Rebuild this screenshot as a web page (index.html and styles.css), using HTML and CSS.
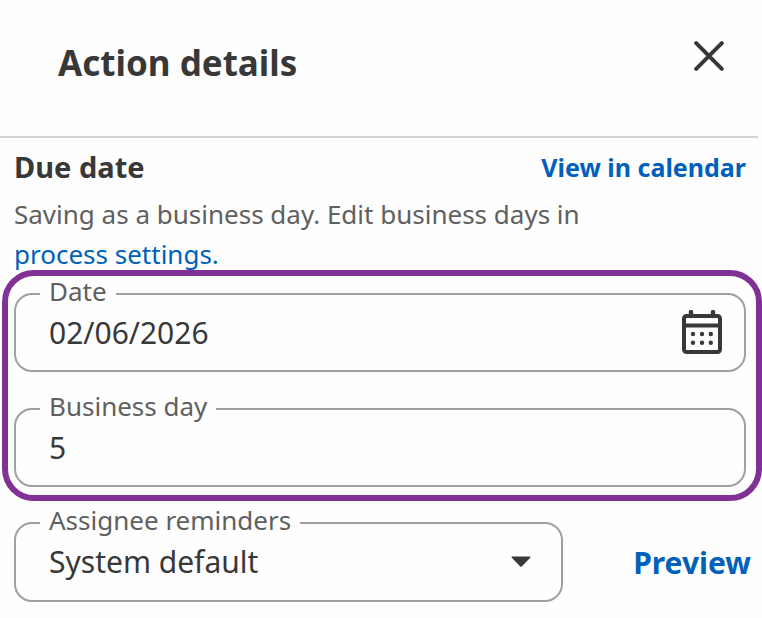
FILE: index.html
```html
<!DOCTYPE html>
<html lang="en">
<head>
<meta charset="utf-8">
<meta name="viewport" content="width=device-width, initial-scale=1">
<title>Action details</title>
<link rel="stylesheet" href="styles.css">
</head>
<body>
<header class="header">
  <h1 class="title">Action details</h1>
  <button class="icon-button" type="button" aria-label="Close">
    <svg width="30" height="30" viewBox="0 0 30 30"><path d="M2.2 2.2 27.8 27.8M27.8 2.2 2.2 27.8" fill="none" stroke="currentColor" stroke-width="4" stroke-linecap="round"/></svg>
  </button>
</header>
<main>
  <section class="intro">
    <div class="intro-row">
      <h2 class="subtitle">Due date</h2>
      <a class="calendar-link" href="#">View in calendar</a>
    </div>
    <p class="description">Saving as a business day. Edit business days in <a class="settings-link" href="#">process settings.</a></p>
  </section>
  <div class="highlight">
    <div class="field">
      <label class="label" for="date">Date</label>
      <input class="value" id="date" type="text" value="02/06/2026">
      <button class="icon-button" type="button" aria-label="Choose date">
        <svg width="40" height="44" viewBox="0 0 40 44">
          <rect x="2" y="6" width="36" height="36" rx="2.500" fill="none" stroke="currentColor" stroke-width="4"/>
          <path d="M2 15.5H38" stroke="currentColor" stroke-width="4"/>
          <path d="M9 6V2M31 6V2" stroke="currentColor" stroke-width="4.400" stroke-linecap="round"/>
          <g fill="currentColor"><circle cx="11" cy="24" r="2.2"/><circle cx="20" cy="24" r="2.2"/><circle cx="28.800" cy="24" r="2.2"/><circle cx="11" cy="32.700" r="2.2"/><circle cx="20" cy="32.700" r="2.2"/><circle cx="28.800" cy="32.700" r="2.2"/></g>
        </svg>
      </button>
    </div>
    <div class="field">
      <label class="label" for="day">Business day</label>
      <input class="value" id="day" type="text" value="5">
    </div>
  </div>
  <div class="reminders">
    <div class="field">
      <label class="label" for="reminders">Assignee reminders</label>
      <select class="value" id="reminders"><option>System default</option></select>
      <svg class="caret" width="20" height="12" viewBox="0 0 20 12"><path d="M1 .5H19Q20 .8 19.200 1.800L11 10.300Q10 11.300 9 10.300L.8 1.800Q0 .8 1 .5Z" fill="currentColor"/></svg>
    </div>
    <button class="preview" type="button">Preview</button>
  </div>
</main>
</body>
</html>
```
FILE: styles.css
```css
* { box-sizing: border-box; }
body {
  margin: 0;
  background: #fefefe;
  color: #383838;
  font-family: "Noto Sans", sans-serif;
  font-size: 26px;
}
button, input, select {
  margin: 0;
  padding: 0;
  border: 0;
  background: transparent;
  color: inherit;
  font: inherit;
}
button { cursor: pointer; }
h1, h2, p { margin: 0; }
a { text-decoration: none; color: #0060ba; }
svg { display: block; }

.header {
  display: flex;
  align-items: flex-start;
  justify-content: space-between;
  margin-right: 4px;
  padding: 41px 34px 51px 58px;
  border-bottom: 2px solid #d4d4d4;
}
.title { font-size: 35px; line-height: 44px; }
.icon-button { flex: none; }

.intro { padding: 9px 16px 0 14px; }
.intro-row {
  display: flex;
  align-items: center;
  justify-content: space-between;
}
.subtitle { font-size: 29px; line-height: 40px; }
.calendar-link { font-size: 25px; font-weight: 700; }
.description {
  padding: 7px 0 1px;
  color: #606060;
  line-height: 40px;
}
.settings-link { white-space: nowrap; }

.highlight {
  display: grid;
  gap: 36px;
  margin: -5px 0 0 2px;
  padding: 17px 10px 8px 6px;
  border: 6px solid #813196;
  border-radius: 32px;
}
.field {
  position: relative;
  display: flex;
  align-items: center;
  padding: 18px 22px 17px 33px;
  border: 2px solid #a0a0a0;
  border-radius: 18px;
}
.label {
  position: absolute;
  top: -18px;
  left: 24px;
  padding: 0 9px;
  background: #fefefe;
  color: #606060;
  line-height: 28px;
}
.value {
  flex: 1;
  min-width: 0;
  height: 40px;
  font-size: 30px;
  line-height: 40px;
  appearance: none;
  outline: 0;
}
.field .icon-button { margin: -3px 0 -1px; }
.caret {
  position: absolute;
  right: 30px;
  pointer-events: none;
}

.reminders {
  display: flex;
  align-items: center;
  justify-content: space-between;
  padding: 21px 11px 16px 14px;
}
.reminders .field {
  flex: 0 1 549px;
  padding-bottom: 18px;
}
.preview {
  color: #0060ba;
  font-size: 30px;
  font-weight: 700;
}
```
